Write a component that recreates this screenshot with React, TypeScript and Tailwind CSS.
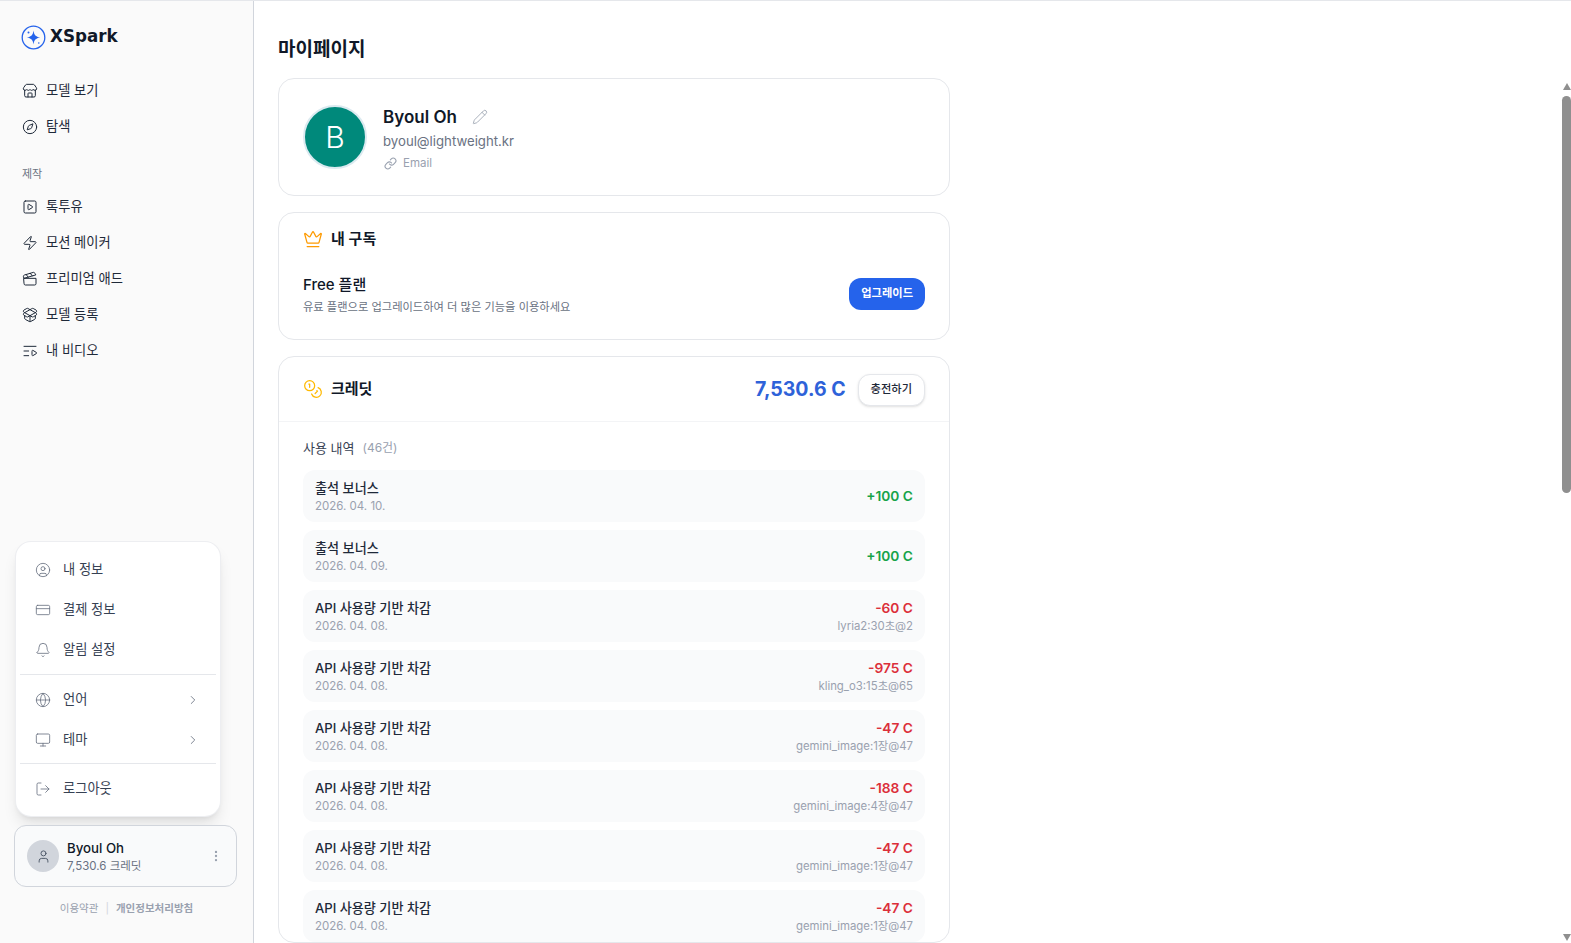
import React from 'react';
import {
  Bell, ChevronRight, CircleUser, Clapperboard, Coins, Compass, CreditCard, Crown, EllipsisVertical,
  Globe, Link, ListVideo, LogOut, Monitor, PackageOpen, Pencil, SquarePlay, Store, User, Zap,
} from 'lucide-react';

const font = "font-['Inter','Noto_Sans_CJK_KR',sans-serif]";

const NavItem = ({ icon: Icon, label }: { icon: React.ElementType; label: string }) => (
  <div className="flex h-9 items-center gap-2 px-[22px] text-[13.25px] font-normal text-gray-800">
    <Icon size={16} strokeWidth={1.5} className="shrink-0 text-gray-800" />
    <span>{label}</span>
  </div>
);

const MenuItem = ({ icon: Icon, label, arrow }: { icon: React.ElementType; label: string; arrow?: boolean }) => (
  <div className="flex h-10 items-center gap-3 pl-[19px] pr-5 text-[13.25px] text-gray-700">
    <Icon size={16} strokeWidth={1.25} className="shrink-0 text-gray-500" />
    <span className="flex-1">{label}</span>
    {arrow && <ChevronRight size={14} strokeWidth={1.5} className="text-gray-500" />}
  </div>
);

const history = [
  { title: '출석 보너스', date: '2026. 04. 10.', amount: '+100 C', plus: true },
  { title: '출석 보너스', date: '2026. 04. 09.', amount: '+100 C', plus: true },
  { title: 'API 사용량 기반 차감', date: '2026. 04. 08.', amount: '-60 C', note: 'lyria2:30초@2' },
  { title: 'API 사용량 기반 차감', date: '2026. 04. 08.', amount: '-975 C', note: 'kling_o3:15초@65' },
  { title: 'API 사용량 기반 차감', date: '2026. 04. 08.', amount: '-47 C', note: 'gemini_image:1장@47' },
  { title: 'API 사용량 기반 차감', date: '2026. 04. 08.', amount: '-188 C', note: 'gemini_image:4장@47' },
  { title: 'API 사용량 기반 차감', date: '2026. 04. 08.', amount: '-47 C', note: 'gemini_image:1장@47' },
  { title: 'API 사용량 기반 차감', date: '2026. 04. 08.', amount: '-47 C', note: 'gemini_image:1장@47' },
];

const Logo = () => (
  <svg width="25" height="25" viewBox="0 0 25 25" fill="none" className="shrink-0">
    <circle cx="12.5" cy="12.5" r="11.3" stroke="#2563eb" strokeWidth="1.3" />
    <path d="M12.5 5.5C13.1 10 14.6 11.7 19.3 12.5C14.6 13.3 13.1 15 12.5 19.5C11.9 15 10.4 13.3 5.7 12.5C10.4 11.7 11.9 10 12.5 5.5Z" fill="#2563eb" />
    <circle cx="7.5" cy="7.5" r="1" fill="#2563eb" />
    <circle cx="17.8" cy="18" r="0.8" fill="#2563eb" />
  </svg>
);

export default function App() {
  return (
    <div className={`${font} relative flex h-screen overflow-hidden border-t border-gray-200 bg-white text-gray-900`}>
      <aside className="flex h-full w-[254px] shrink-0 flex-col border-r border-gray-300 bg-[#fafafa]">
        <div className="flex h-[72px] items-center gap-[4px] px-[21px]">
          <Logo />
          <span className="font-['DejaVu_Sans',sans-serif] text-[16.75px] font-bold text-gray-900">XSpark</span>
        </div>
        <nav>
          <NavItem icon={Store} label="모델 보기" />
          <NavItem icon={Compass} label="탐색" />
          <div className="mt-[15px] flex h-[29px] items-center px-[22px] text-[11px] text-gray-500">제작</div>
          <NavItem icon={SquarePlay} label="톡투유" />
          <NavItem icon={Zap} label="모션 메이커" />
          <NavItem icon={Clapperboard} label="프리미엄 애드" />
          <NavItem icon={PackageOpen} label="모델 등록" />
          <NavItem icon={ListVideo} label="내 비디오" />
        </nav>
        <div className="mt-auto px-[14px] pb-[26px]">
          <div className="ml-px w-[206px] rounded-2xl border border-gray-200/70 bg-white pb-[7px] pt-2 shadow-lg">
            <MenuItem icon={CircleUser} label="내 정보" />
            <MenuItem icon={CreditCard} label="결제 정보" />
            <MenuItem icon={Bell} label="알림 설정" />
            <div className="mx-1 mb-[5px] mt-1 border-t border-gray-200" />
            <MenuItem icon={Globe} label="언어" arrow />
            <MenuItem icon={Monitor} label="테마" arrow />
            <div className="mx-1 mb-[5px] mt-[3px] border-t border-gray-200" />
            <MenuItem icon={LogOut} label="로그아웃" />
          </div>
          <div className="mt-2 flex h-[62px] w-[223px] items-center gap-2 rounded-xl border border-gray-300 bg-[#f9fafb] px-3">
            <div className="flex size-8 items-center justify-center rounded-full bg-gray-300">
              <User size={15} strokeWidth={1.5} className="text-gray-600" />
            </div>
            <div className="min-w-0 flex-1">
              <div className="text-[13.25px] font-medium leading-[18px] text-gray-900">Byoul Oh</div>
              <div className="mt-px text-[11.5px] leading-4 text-gray-500">7,530.6 크레딧</div>
            </div>
            <EllipsisVertical size={14} className="mr-[1px] text-gray-400" />
          </div>
          <div className="mt-[14px] flex items-center justify-center gap-[7px] text-[10.5px] text-gray-400">
            <span>이용약관</span>
            <span className="text-gray-300">|</span>
            <span className="font-semibold">개인정보처리방침</span>
          </div>
        </div>
      </aside>

      <main className="min-w-0 flex-1 px-6 pt-[35px]">
        <h1 className="text-[19px] font-bold leading-7 text-gray-900">마이페이지</h1>
        <div className="mt-[14px] flex max-w-2xl flex-col gap-4">
          <section className="flex h-[118px] items-center gap-4 rounded-2xl border border-gray-200 bg-white px-6">
            <div className="flex size-16 shrink-0 items-center justify-center rounded-full border-2 border-[#dbeaf0] bg-[#00897b] text-[30px] font-light text-white">B</div>
            <div>
              <div className="flex items-center gap-[15px]">
                <span className="text-[17px] font-semibold leading-7 text-gray-900">Byoul Oh</span>
                <Pencil size={16} strokeWidth={1.25} className="text-gray-400" />
              </div>
              <div className="text-[13.2px] leading-5 text-gray-500">byoul@lightweight.kr</div>
              <div className="mt-1 flex items-center gap-[6px] pl-px text-[11.5px] leading-4 text-gray-400">
                <Link size={13} strokeWidth={2} />
                <span>Email</span>
              </div>
            </div>
          </section>

          <section className="h-[128px] rounded-2xl border border-gray-200 bg-white px-6 pt-4">
            <div className="flex items-center gap-[8px]">
              <Crown size={20} strokeWidth={1.5} className="text-amber-500" />
              <span className="text-[15px] font-semibold leading-5 text-gray-900">내 구독</span>
            </div>
            <div className="mt-[25px] flex items-center justify-between">
              <div>
                <div className="text-[15px] font-medium leading-[22px] text-gray-900">Free 플랜</div>
                <div className="mt-[3px] text-[11.25px] leading-4 text-gray-500">유료 플랜으로 업그레이드하여 더 많은 기능을 이용하세요</div>
              </div>
              <button className="mb-[2px] h-8 rounded-xl bg-[#2563eb] px-3 text-[11.25px] font-semibold text-white">업그레이드</button>
            </div>
          </section>

          <section className="rounded-2xl border border-gray-200 bg-white">
            <div className="flex h-[65px] items-center justify-between border-b border-gray-100 px-6">
              <div className="flex items-center gap-[8px]">
                <Coins size={20} strokeWidth={1.5} className="text-amber-400" />
                <span className="text-[15px] font-semibold text-gray-900">크레딧</span>
              </div>
              <div className="mt-px flex items-center gap-3">
                <span className="text-[19.5px] font-bold text-[#2e62d9]">7,530.6 C</span>
                <button className="h-8 rounded-xl border border-gray-200 bg-white px-3 text-[11.25px] font-medium text-gray-800 shadow-sm">충전하기</button>
              </div>
            </div>
            <div className="px-6 pt-[17px]">
              <div className="flex items-center gap-2 text-[13px] leading-[18px] text-gray-700">
                <span>사용 내역</span>
                <span className="text-[12px] text-gray-400">(46건)</span>
              </div>
              <div className="mt-[13px] flex flex-col gap-2">
                {history.map((item, i) => (
                  <div key={i} className="flex h-[52px] items-center justify-between rounded-xl bg-[#f9fafb] px-3">
                    <div>
                      <div className="text-[13.1px] font-medium leading-[18px] text-gray-800">{item.title}</div>
                      <div className="mt-px text-[11.5px] leading-4 text-gray-400">{item.date}</div>
                    </div>
                    <div className="text-right">
                      <div className={`text-[13.75px] font-semibold leading-[18px] ${item.plus ? 'text-[#16a34a]' : 'text-[#dc2f3a]'}`}>{item.amount}</div>
                      {item.note && <div className="mt-px text-[11.375px] leading-4 text-gray-400">{item.note}</div>}
                    </div>
                  </div>
                ))}
              </div>
            </div>
          </section>
        </div>
      </main>

      {/* page scrollbar */}
      <div className="absolute right-0 top-[82px] bottom-0 flex w-[9px] flex-col items-center justify-between">
        <div className="size-0 border-x-[4.5px] border-b-[7px] border-x-transparent border-b-[#8f8f8f]" />
        <div className="absolute top-[13px] h-[397px] w-[9px] rounded-full bg-[#8f8f8f]" />
        <div className="mb-[2px] size-0 border-x-[4.5px] border-t-[7px] border-x-transparent border-t-[#8f8f8f]" />
      </div>
    </div>
  );
}
